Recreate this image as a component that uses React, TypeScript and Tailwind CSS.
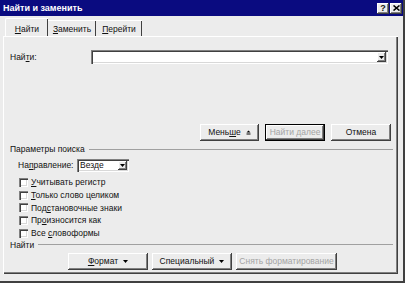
import React from 'react';

const raised =
  'bg-[#ececec] shadow-[inset_-1px_-1px_0_#404040,inset_1px_1px_0_#ffffff,inset_-2px_-2px_0_#808080]';
const sunken =
  'bg-white shadow-[inset_1px_1px_0_#808080,inset_2px_2px_0_#404040,inset_-1px_-1px_0_#ffffff,inset_-2px_-2px_0_#d8d8d8]';

function U({ children }: { children: React.ReactNode }) {
  return <span className="underline underline-offset-[1px]">{children}</span>;
}

function Down({ color = '#000' }: { color?: string }) {
  return (
    <svg width="5" height="3" viewBox="0 0 5 3">
      <path d="M0 0 H5 L2.5 3 Z" fill={color} />
    </svg>
  );
}

function Up() {
  return (
    <svg width="5" height="5" viewBox="0 0 5 5">
      <path d="M2.5 0.5 L4.5 2.5 L0.5 2.5 Z" fill="#000" />
      <rect x="0.5" y="3.5" width="4" height="1" fill="#000" />
    </svg>
  );
}

function Check({ children }: { children: React.ReactNode }) {
  return (
    <div className="h-[12.75px] flex items-center pl-[15px]">
      <div className={`w-[9px] h-[9px] ${sunken}`} />
      <span className="ml-[3px]">{children}</span>
    </div>
  );
}

function Section({ label }: { label: string }) {
  return (
    <div className="h-[11px] flex items-center pl-[6px]">
      <span>{label}</span>
      <div className="flex-1 ml-[4px] mr-[5px] h-[2px] border-t border-[#a0a0a0] border-b-white" />
    </div>
  );
}

export default function App() {
  return (
    <div className="w-[405px] h-[283px] bg-[#ececec] flex flex-col overflow-hidden border-r-2 border-b-2 border-[#404040] text-[8.5px] leading-none text-[#111] font-['Liberation_Sans',Arial,sans-serif] select-none">
      {/* title bar */}
      <div className="h-[16px] bg-[#0a0b80] flex items-center justify-between pl-[3px] pr-[1px]">
        <span className="text-white font-bold text-[9px]">Найти и заменить</span>
        <div className="flex items-center gap-[1px]">
          <div className={`w-[12px] h-[11px] ${raised} flex items-center justify-center font-bold text-[9px]`}>?</div>
          <div className={`w-[12px] h-[11px] ${raised} flex items-center justify-center`}>
            <svg width="7" height="6" viewBox="0 0 7 6">
              <path d="M0.5 0.5 L6.5 5.5 M6.5 0.5 L0.5 5.5" stroke="#000" strokeWidth="1.6" />
            </svg>
          </div>
        </div>
      </div>

      {/* tabs */}
      <div className="h-[20px] flex items-end pl-[5px]">
        <div className="w-[43px] h-[18px] border-t border-l border-white shadow-[inset_-1px_0_0_#404040] flex items-center justify-center pt-[3px] rounded-tl-[2px]">
          <span><U>Н</U>айти</span>
        </div>
        <div className="w-[48px] h-[16px] border-t border-white shadow-[inset_-1px_0_0_#404040] flex items-center justify-center pt-[2px]">
          <span><U>З</U>аменить</span>
        </div>
        <div className="w-[46px] h-[16px] border-t border-white shadow-[inset_-1px_0_0_#404040] flex items-center justify-center pt-[2px]">
          <span><U>П</U>ерейти</span>
        </div>
      </div>

      {/* panel */}
      <div className="ml-[3px] w-[395px] h-[238px] border-t border-l border-white shadow-[inset_-1px_-1px_0_#404040,inset_-2px_-2px_0_#808080] flex flex-col">
        <div className="mt-[13px] flex items-center">
          <span className="w-[87px] pl-[6px]">Най<U>т</U>и:</span>
          <div className={`w-[297px] h-[14px] ${sunken} flex justify-end items-center pr-[2px]`}>
            <div className={`w-[9px] h-[10px] ${raised} flex items-center justify-center`}>
              <Down />
            </div>
          </div>
        </div>

        <div className="mt-[60px] flex items-center pl-[196px] gap-[6px]">
          <div className={`w-[59px] h-[17px] ${raised} flex items-center justify-center gap-[5px]`}>
            <span>Мень<U>ш</U>е</span>
            <Up />
          </div>
          <div className="w-[60px] h-[17px] border border-black">
            <div className={`w-full h-full ${raised} flex items-center justify-center text-[#a4a4a4]`}>
              Найти далее
            </div>
          </div>
          <div className={`w-[60px] h-[17px] ${raised} flex items-center justify-center`}>Отмена</div>
        </div>

        <div className="mt-[3px]">
          <Section label="Параметры поиска" />
        </div>

        <div className="mt-[4px] flex items-center">
          <span className="w-[73px] pl-[14px]">На<U>п</U>равление:</span>
          <div className={`w-[52px] h-[13px] ${sunken} flex items-center justify-between pl-[3px] pr-[2px]`}>
            <span>Везде</span>
            <div className={`w-[9px] h-[9px] ${raised} flex items-center justify-center`}>
              <Down />
            </div>
          </div>
        </div>

        <div className="mt-[4px] flex flex-col">
          <Check><U>У</U>читывать регистр</Check>
          <Check><U>Т</U>олько слово целиком</Check>
          <Check>Под<U>с</U>тановочные знаки</Check>
          <Check>Пр<U>о</U>износится как</Check>
          <Check>Все <U>с</U>ловоформы</Check>
        </div>

        <Section label="Найти" />

        <div className="mt-[2px] flex items-center pl-[64px] gap-[4px]">
          <div className={`w-[80px] h-[17px] ${raised} flex items-center justify-center gap-[5px]`}>
            <span><U>Ф</U>ормат</span>
            <Down />
          </div>
          <div className={`w-[80px] h-[17px] ${raised} flex items-center justify-center gap-[5px]`}>
            <span>Специальный</span>
            <Down />
          </div>
          <div className={`w-[101px] h-[17px] ${raised} flex items-center justify-center text-[#a4a4a4]`}>
            Снять форматирование
          </div>
        </div>
      </div>
    </div>
  );
}
